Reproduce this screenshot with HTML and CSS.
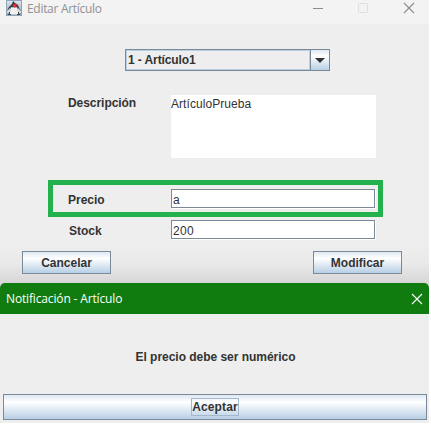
FILE: index.html
```html
<!DOCTYPE html>
<html lang="es">
<head>
<meta charset="utf-8">
<title>Editar Artículo</title>
<link rel="stylesheet" href="styles.css">
</head>
<body>
<main class="app">
  <header class="titlebar">
    <svg class="logo" width="16" height="16" viewBox="0 0 16 16">
      <defs><linearGradient id="sky" x1="0" y1="0" x2="0" y2="1"><stop offset="0" stop-color="#dfe9f1"/><stop offset="1" stop-color="#7f98ad"/></linearGradient></defs>
      <rect x=".5" y=".5" width="15" height="15" fill="url(#sky)" stroke="#8fa5b8"/>
      <path d="M7 1l2 2 3 2 1 3 2 3-3-1-1-3H5l-1 3-3 1 2-4 3-3Z" fill="#353a40"/>
      <path d="M5 8h6l1.500 6.500h-9Z" fill="#f1f2ef"/>
      <path d="M1 11l3-3 1 2-2 3H1zM15 11l-3-3-1 2 2 3h2z" fill="#d5dadd"/>
      <path d="M2 14.500h3M11 14.500h3M3.500 12v2M12.500 12v2" stroke="#41474d"/>
      <circle cx="8.800" cy="5.600" r="2" fill="#e32b2b"/>
    </svg>
    <span class="title">Editar Artículo</span>
    <svg class="controls" width="104" height="12" viewBox="0 0 104 12" fill="none">
      <path d="M0 6.500h10" stroke="#8d8d8d"/>
      <rect x="45.500" y="1.500" width="9" height="9" rx="1" stroke="#dedede"/>
      <path d="M91 1l10 10M101 1L91 11" stroke="#8d8d8d" stroke-width="1.100"/>
    </svg>
  </header>
  <section class="editor">
    <div class="combo"><span class="combo-value">1 - Artículo1</span><span class="combo-arrow"><svg width="10" height="5" viewBox="0 0 10 5"><path d="M0 0h10L5 5Z" fill="#333"/></svg></span></div>
    <div class="row description"><span class="label">Descripción</span><div class="textarea">ArtículoPrueba</div></div>
    <div class="row price"><span class="label">Precio</span><div class="field">a</div></div>
    <div class="row stock"><span class="label">Stock</span><div class="field">200</div></div>
    <div class="actions"><div class="button">Cancelar</div><div class="button">Modificar</div></div>
  </section>
  <section class="dialog">
    <header class="dialog-title"><span class="dialog-name">Notificación - Artículo</span>
      <svg width="12" height="12" viewBox="0 0 12 12"><path d="M1 1l10 10M11 1L1 11" stroke="#fff" stroke-width="1.100"/></svg>
    </header>
    <p class="message">El precio debe ser numérico</p>
    <div class="button accept"><span class="focus">Aceptar</span></div>
  </section>
</main>
</body>
</html>
```
FILE: styles.css
```css
* { box-sizing: border-box; }
body { margin: 0; background: #fff; overflow: hidden; font: bold 12px/14px "Liberation Sans", Arial, sans-serif; color: #333; }
svg { display: block; flex: none; }
.app { width: 429px; height: 423px; background: #eee; display: flex; flex-direction: column; }
.titlebar { height: 24px; flex: none; background: #f3f3f3; display: flex; align-items: flex-start; padding-left: 6px; }
.title { font: 12px/16px "Open Sans", "Noto Sans", sans-serif; color: #919191; margin-left: 5px; padding-top: 1px; width: 286px; letter-spacing: -0.3px; white-space: nowrap; }
.controls { margin-top: 2px; }
.editor { height: 259px; flex: none; padding-top: 25px; background: linear-gradient(#eee 220px, #e9e9e9 240px, #d6d6d6 259px); }
.combo { width: 205px; height: 22px; margin-left: 125px; border: 1px solid #7a8a99; display: flex; }
.combo-value { flex: 1; border: 1px solid #b8cfe5; padding: 2px 0 0 1px; letter-spacing: -0.1px; }
.combo-arrow { width: 19px; border-left: 1px solid #7a8a99; display: flex; align-items: center; justify-content: center; background: linear-gradient(#dde8f3, #fff 30%, #b8cfe5); }
.row { display: flex; }
.label { width: 103px; flex: none; }
.description { margin: 24px 0 0 68px; height: 63px; }
.description .label { padding-top: 1px; letter-spacing: -0.05px; }
.textarea { width: 205px; background: #fff; font-weight: normal; padding-top: 2px; letter-spacing: 0.06px; }
.price { margin: 22px 0 0 48px; width: 335px; height: 37px; border: 5px solid #22b14c; padding: 4px 0 0 15px; }
.price .label, .stock .label { padding-top: 4px; }
.stock .label { padding-left: 1px; }
.field { width: 204px; height: 19px; background: #fff; border: 1px solid #7a8a99; box-shadow: 1px 1px #fff; font-weight: normal; padding: 3px 0 0 1px; line-height: 14px; letter-spacing: 0.3px; }
.stock { margin: 3px 0 0 68px; height: 31px; }
.actions { display: flex; justify-content: space-between; padding: 0 27px 0 22px; }
.button { width: 89px; height: 23px; border: 1px solid #7a8a99; background: linear-gradient(#dde8f3, #fff 30%, #b8cfe5); display: flex; align-items: center; justify-content: center; }
.dialog { flex: 1; display: flex; flex-direction: column; background: linear-gradient(#d6d6d6 6px, #eee 6px); }
.dialog-title { height: 31px; background: #107c10; border-radius: 5px 5px 0 0; display: flex; align-items: center; justify-content: space-between; padding: 0 6px; }
.dialog-name { font: 12px/16px "Open Sans", "Noto Sans", sans-serif; color: #fff; letter-spacing: -0.15px; }
.message { margin: 36px 0 0 2px; text-align: center; height: 44px; letter-spacing: -0.03px; }
.accept { width: 424px; height: 26px; margin-left: 3px; }
.focus { border: 1px solid #a3b8cc; height: 18px; line-height: 17px; letter-spacing: 0.1px; }
```
